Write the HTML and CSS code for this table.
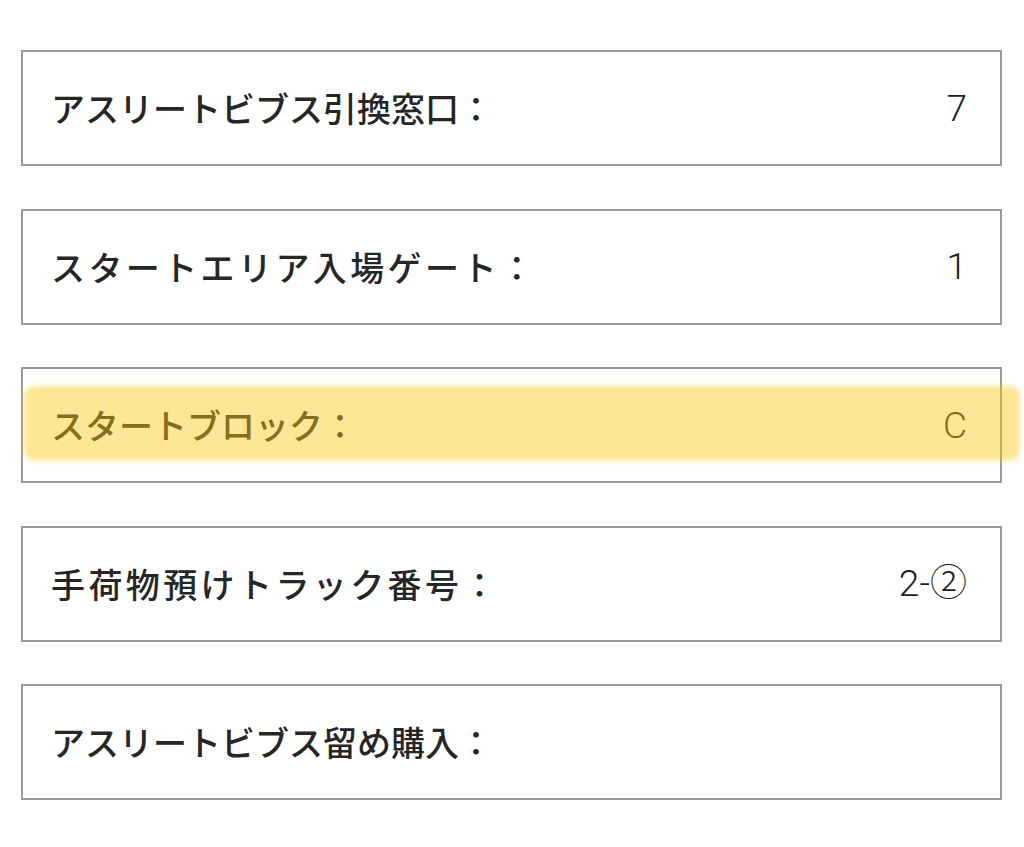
FILE: index.html
```html
<!DOCTYPE html>
<html lang="ja">
<head>
<meta charset="utf-8">
<title>受付情報</title>
<link rel="stylesheet" href="styles.css">
</head>
<body>
<div class="list">
  <div class="row">
    <span class="label">アスリートビブス引換窓口：</span>
    <span class="value">7</span>
  </div>
  <div class="row">
    <span class="label label-wide">スタートエリア入場ゲート：</span>
    <span class="value">1</span>
  </div>
  <div class="row">
    <span class="label">スタートブロック：</span>
    <span class="value">C</span>
    <span class="marker"></span>
  </div>
  <div class="row">
    <span class="label label-wide">手荷物預けトラック番号：</span>
    <span class="value">2-②</span>
  </div>
  <div class="row">
    <span class="label">アスリートビブス留め購入：</span>
    <span class="value"></span>
  </div>
</div>
</body>
</html>
```

FILE: styles.css
```css
html, body {
  margin: 0;
  padding: 0;
  background: #ffffff;
}

body {
  font-family: "Noto Sans CJK JP", "Noto Sans", sans-serif;
  color: #262626;
}

.list {
  display: flex;
  flex-direction: column;
  gap: 42.5px;
  padding: 50px 22px 0 21px;
}

.row {
  position: relative;
  box-sizing: border-box;
  height: 116px;
  border: 2px solid #9a9a9a;
  display: flex;
  align-items: center;
  justify-content: space-between;
  padding: 0 33px 0 28px;
}

.label {
  font-size: 34px;
  font-weight: 500;
  line-height: 1;
}

.label-wide {
  letter-spacing: 3.4px;
}

.value {
  font-family: Roboto, "Noto Sans CJK JP", sans-serif;
  font-size: 37px;
  font-weight: 300;
  line-height: 1;
  color: #1e1e1e;
}

.marker {
  position: absolute;
  left: 1px;
  right: -20px;
  top: 17px;
  height: 75px;
  border-radius: 10px;
  background: rgba(251, 200, 22, 0.45);
  filter: blur(2.5px);
  pointer-events: none;
}
```
